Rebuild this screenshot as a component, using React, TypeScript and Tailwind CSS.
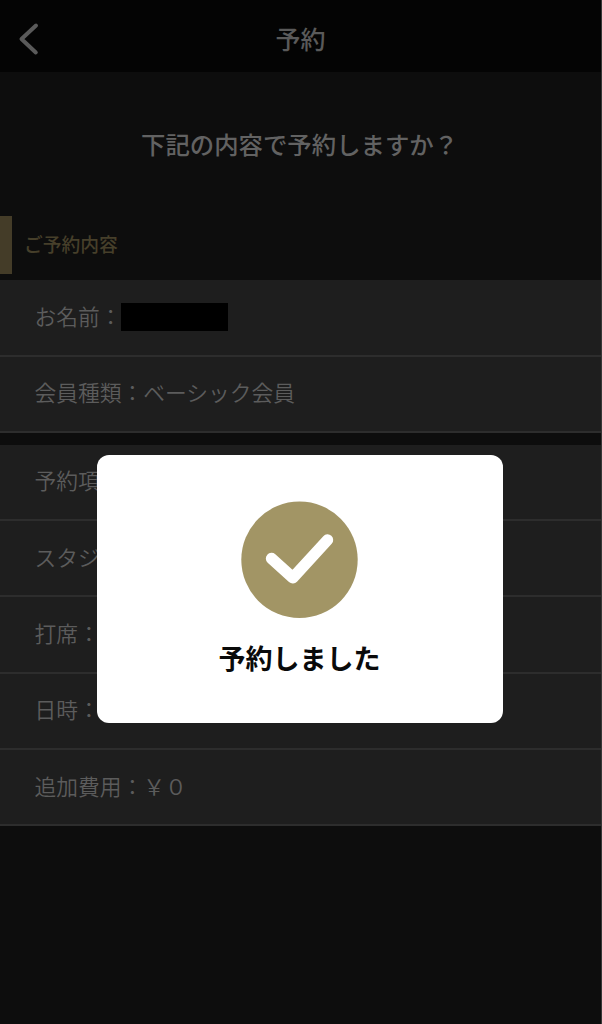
import React from 'react';

const memberRows = [
  { label: 'お名前', value: '', masked: true },
  { label: '会員種類', value: 'ベーシック会員' },
];

const bookingRows = [
  { label: '予約項目', value: '' },
  { label: 'スタジオ', value: '' },
  { label: '打席', value: '' },
  { label: '日時', value: '' },
  { label: '追加費用', value: '￥０' },
];

// ── Detail Row ────────────────────────────────────────────────────────────────
function DetailRow({ label, value, masked }: {
  label: string; value: string; masked?: boolean;
}) {
  return (
    <div className="flex items-center h-[76.3px] pl-[34.5px] pb-[3px] border-b-2 border-[#2d2d2d] text-[21.75px] leading-none font-[350] text-[#5c5c5c]">
      <span className="whitespace-nowrap">{label}：{value}</span>
      {masked && <span className="w-[107px] h-7 -ml-[0.5px] mt-0.5 bg-black" />}
    </div>
  );
}

// ── Done Dialog ───────────────────────────────────────────────────────────────
function DoneDialog({ message }: { message: string }) {
  return (
    <div className="absolute left-[97px] top-[455px] w-[406px] h-[268px] rounded-xl bg-white flex flex-col items-center pt-[46px] pr-px">
      <svg width="117" height="117" viewBox="0 0 117 117" fill="none">
        <circle cx="58.5" cy="58.8" r="58.2" fill="#a29565" />
        <path d="M30.5 57.5 L51.8 76.8 L86.5 39" stroke="#fff" strokeWidth="11.4" strokeLinecap="round" strokeLinejoin="round" />
      </svg>
      <p className="mt-[26px] text-[27px] leading-[27px] font-bold text-[#0a0a0a]">{message}</p>
    </div>
  );
}

// ── Reservation Confirm Page ──────────────────────────────────────────────────
export default function App() {
  return (
    <div className="relative w-[602px] h-[1024px] overflow-hidden bg-[#0d0d0d] border-r border-[#383838] font-['Noto_Sans_CJK_JP',sans-serif]">

      {/* Header */}
      <header className="grid grid-cols-[60px_1fr_60px] items-center h-[72px] bg-[#040404]">
        <svg className="mt-1.5 ml-[15.6px]" width="26" height="36" viewBox="0 0 26 36" fill="none">
          <path d="M20 4.5 L5.5 18 L19.8 31.5" stroke="#5a5a5a" strokeWidth="4" strokeLinecap="round" strokeLinejoin="round" />
        </svg>
        <h1 className="pt-1 text-center text-[25px] leading-none font-medium text-[#5a5a5a]">予約</h1>
      </header>

      <p className="h-[144px] pt-[60px] pl-[141px] text-[24.4px] leading-[24.4px] font-medium text-[#626262] whitespace-nowrap">
        下記の内容で予約しますか？
      </p>

      {/* Section heading */}
      <h2 className="flex items-center h-[58px] mb-[6.4px] pl-3 pb-px border-l-[12px] border-[#443c28] text-[18.8px] leading-none font-medium text-[#463f2a]">
        ご予約内容
      </h2>

      <section className="bg-[#1e1e1e]">
        {memberRows.map(row => <DetailRow key={row.label} {...row} />)}
      </section>

      <section className="mt-[11.7px] bg-[#1e1e1e]">
        {bookingRows.map(row => <DetailRow key={row.label} {...row} />)}
      </section>

      <DoneDialog message="予約しました" />
    </div>
  );
}
